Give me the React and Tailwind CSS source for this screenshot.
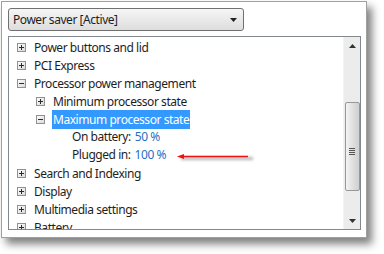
import React from 'react';

const font = { fontFamily: '"Noto Sans", "Open Sans", sans-serif' };

const Expander = ({ open }) => (
  <svg width="9" height="9" viewBox="0 0 9 9" className="shrink-0">
    <defs>
      <linearGradient id={open ? 'gm' : 'gp'} x1="0" y1="0" x2="1" y2="1">
        <stop offset="0" stopColor="#ffffff" />
        <stop offset="1" stopColor="#d8d8d8" />
      </linearGradient>
    </defs>
    <rect x="0.5" y="0.5" width="8" height="8" fill={`url(#${open ? 'gm' : 'gp'})`} stroke="#919191" />
    <path d="M2 4.5h5" stroke="#2b2b2b" />
    {!open && <path d="M4.5 2v5" stroke="#2b2b2b" />}
  </svg>
);

const Row = ({ level, expander, children, selected }) => {
  const pad = level === 0 ? 'pl-[8px]' : 'pl-[27px]';
  return (
    <div className={`h-[18px] flex items-center ${pad}`}>
      {expander && <Expander open={expander === 'open'} />}
      <span
        className={`ml-[7px] px-[1px] h-[19px] leading-[19px] whitespace-nowrap ${
          selected ? 'bg-[#3399ff] text-white' : 'text-[#1e1e1e]'
        }`}
      >
        {children}
      </span>
    </div>
  );
};

export default function App() {
  return (
    <div className="w-[384px] h-[254px] bg-white p-[1px] text-[12px] tracking-[-0.45px]" style={font}>
      <div className="w-[366px] h-[237px] bg-white border border-[#a0a0a0] shadow-[5px_6px_8px_rgba(0,0,0,0.5)] pl-[6px] pt-[6px]">
        <div className="w-[236px] h-[23px] rounded-[3px] border border-[#707070] bg-gradient-to-b from-[#f6f6f6] to-[#dddddd] flex items-center justify-between pl-[4px] pr-[6px]">
          <span className="text-[#1e1e1e]">Power saver [Active]</span>
          <svg width="7" height="4" viewBox="0 0 7 4">
            <path d="M0 0h7L3.5 4z" fill="#222" />
          </svg>
        </div>
        <div className="mt-[5px] w-[353px] h-[194px] border border-[#828790] bg-white flex overflow-hidden">
          <div className="flex-1 pt-[1px] overflow-hidden">
            <Row level={0} expander="closed">Power buttons and lid</Row>
            <Row level={0} expander="closed">PCI Express</Row>
            <Row level={0} expander="open">Processor power management</Row>
            <Row level={1} expander="closed">Minimum processor state</Row>
            <Row level={1} expander="open" selected>Maximum processor state</Row>
            <div className="h-[18px] flex items-center pl-[63px] text-[#1e1e1e]">
              On battery: <span className="ml-[4px] text-[#1f6fc5]">50 %</span>
            </div>
            <div className="h-[18px] flex items-center pl-[63px] text-[#1e1e1e] relative">
              Plugged in: <span className="ml-[4px] text-[#1f6fc5]">100 %</span>
              <div className="absolute left-[168px] top-[8px] w-[72px] h-[6px]">
                <div className="absolute left-[4px] top-[3px] w-[72px] h-[3px] bg-[#b5b5b5] blur-[1.5px]" />
                <svg width="72" height="6" viewBox="0 0 72 6" className="absolute left-0 top-0">
                  <path d="M5 2.5h66" stroke="#ee1111" strokeWidth="1.6" />
                  <path d="M0 2.5L7 0v5z" fill="#ee1111" />
                </svg>
              </div>
            </div>
            <Row level={0} expander="closed">Search and Indexing</Row>
            <Row level={0} expander="closed">Display</Row>
            <Row level={0} expander="closed">Multimedia settings</Row>
            <Row level={0} expander="closed">Battery</Row>
          </div>
          <div className="w-[17px] h-full bg-[#ececec] border-l border-[#f4f4f4] flex flex-col items-center">
            <div className="h-[17px] w-full flex items-center justify-center">
              <svg width="7" height="4" viewBox="0 0 7 4">
                <path d="M0 4h7L3.5 0z" fill="#333" />
              </svg>
            </div>
            <div className="mt-[48px] w-[15px] h-[89px] rounded-[2px] border border-[#989898] bg-gradient-to-r from-[#f3f3f3] via-[#e0e0e0] to-[#cfcfcf] flex items-center justify-center">
              <div className="flex flex-col gap-[1px] mt-[10px]">
                <div className="w-[6px] h-[1px] bg-[#555]" />
                <div className="w-[6px] h-[1px] bg-[#555]" />
                <div className="w-[6px] h-[1px] bg-[#555]" />
                <div className="w-[6px] h-[1px] bg-[#555]" />
              </div>
            </div>
            <div className="flex-1" />
            <div className="h-[17px] w-full flex items-center justify-center">
              <svg width="7" height="4" viewBox="0 0 7 4">
                <path d="M0 0h7L3.5 4z" fill="#333" />
              </svg>
            </div>
          </div>
        </div>
      </div>
    </div>
  );
}
